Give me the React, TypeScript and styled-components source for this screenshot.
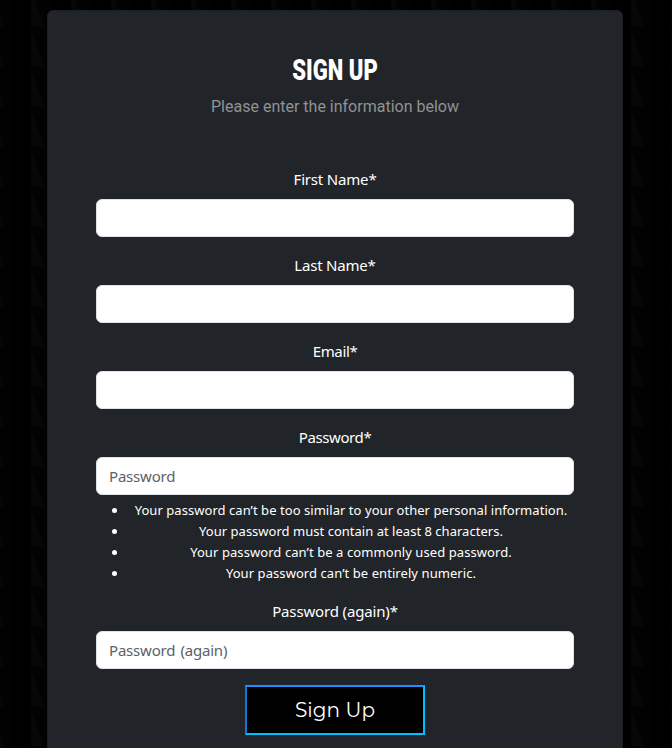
import React from "react";
import styled, { createGlobalStyle } from "styled-components";

const GlobalStyle = createGlobalStyle`
  *, *::before, *::after { box-sizing: border-box; }
  html, body { margin: 0; height: 100%; background: #000; overflow: hidden; }
  body { font-family: "Noto Sans", "Open Sans", sans-serif; color: #fff; }
`;

const Page = styled.main`
  height: 748px;
  overflow: hidden;
  padding: 10px 49px 0 47px;
  background-color: #000;
  background-image:
    url("data:image/svg+xml,%3Csvg xmlns='http://www.w3.org/2000/svg' width='40' height='40'%3E%3Cpath d='M0 0h20v40H0z' fill='%23020202'/%3E%3Cpath d='M0 1L13 37H0z' fill='%23070707'/%3E%3C/svg%3E");
  background-size: 40px 40px;
  background-position: 31px 29px;
`;

const Card = styled.section`
  width: 576px;
  height: 800px;
  padding: 40px 48px 0;
  border: 1px solid #1c1f22;
  border-radius: 6px;
  background: #212529;
  text-align: center;
`;

const Title = styled.h2`
  margin: 0;
  height: 38px;
  font: 900 30px/38px Roboto, sans-serif;
  white-space: nowrap;
  transform: scaleX(0.735);
`;

const Subtitle = styled.p`
  margin: 6px 0 48px;
  font: 400 16px/24px Roboto, sans-serif;
  color: #909294;
`;

const Form = styled.form`
  display: flex;
  flex-direction: column;
  align-items: center;
`;

const Field = styled.div`
  width: 100%;
  margin-bottom: 16px;
`;

const Label = styled.label<{ $tracking: number }>`
  display: block;
  margin-bottom: 8px;
  font-size: 15px;
  line-height: 24px;
  letter-spacing: ${(p) => p.$tracking}px;
`;

const Input = styled.input`
  display: block;
  width: 100%;
  height: 38px;
  padding: 6px 12px;
  border: 1px solid #dee2e6;
  border-radius: 6px;
  background: #fff;
  font: 15px/24px "Noto Sans", sans-serif;
  letter-spacing: -0.2px;
  word-spacing: 1.5px;
  &::placeholder { color: #5c6166; opacity: 1; }
`;

const Hints = styled.ul`
  margin: 5px 0 -1px;
  padding-left: 32px;
  font-size: 13px;
  line-height: 21px;
`;

const Hint = styled.li<{ $tracking: number }>`
  white-space: nowrap;
  letter-spacing: ${(p) => p.$tracking}px;
`;

const Submit = styled.button`
  width: 180px;
  height: 50px;
  padding: 0;
  border: 2px solid;
  border-color: #1e90ff #00bfff #00bfff #0a7bd6;
  background: #000;
  color: #fff;
  font: 400 20px/24px Montserrat, Inter, sans-serif;
  letter-spacing: 0.1px;
`;

const fields = [
  { id: "first", label: "First Name*", type: "text", tracking: -0.18 },
  { id: "last", label: "Last Name*", type: "text", tracking: -0.2 },
  { id: "email", label: "Email*", type: "email", tracking: -0.35 },
  { id: "password", label: "Password*", type: "password", placeholder: "Password", tracking: -0.4, hints: true },
  { id: "again", label: "Password (again)*", type: "password", placeholder: "Password (again)", tracking: -0.15 },
];

const hints = [
  { text: "Your password can’t be too similar to your other personal information.", tracking: 0.05 },
  { text: "Your password must contain at least 8 characters.", tracking: 0.02 },
  { text: "Your password can’t be a commonly used password.", tracking: 0.08 },
  { text: "Your password can’t be entirely numeric.", tracking: 0.07 },
];

export default function App() {
  return (
    <>
      <GlobalStyle />
      <Page>
        <Card>
          <Title>SIGN UP</Title>
          <Subtitle>Please enter the information below</Subtitle>
          <Form>
            {fields.map((f) => (
              <Field key={f.id}>
                <Label htmlFor={f.id} $tracking={f.tracking}>{f.label}</Label>
                <Input id={f.id} type={f.type} placeholder={f.placeholder} />
                {f.hints && (
                  <Hints>
                    {hints.map((h) => (
                      <Hint key={h.text} $tracking={h.tracking}>{h.text}</Hint>
                    ))}
                  </Hints>
                )}
              </Field>
            ))}
            <Submit type="button">Sign Up</Submit>
          </Form>
        </Card>
      </Page>
    </>
  );
}
